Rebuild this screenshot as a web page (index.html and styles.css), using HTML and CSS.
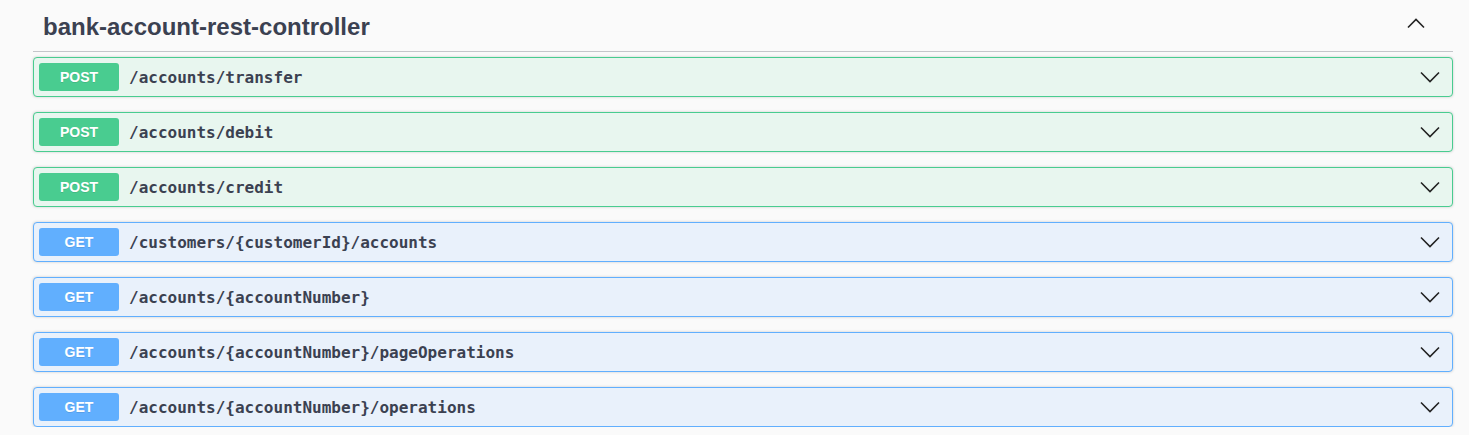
FILE: index.html
```html
<!DOCTYPE html>
<html>
<head>
<meta charset="utf-8">
<link rel="stylesheet" href="styles.css">
</head>
<body>
<div class="wrap">
  <div class="tag">
    <h3 class="tag-title">bank-account-rest-controller</h3>
    <svg class="tag-arrow" width="20" height="20" viewBox="0 0 20 20"><polyline points="2,13.5 10,5.5 18,13.5" fill="none" stroke="#222" stroke-width="1.6"/></svg>
  </div>
  <div class="ops">
    <div class="op post"><span class="method">POST</span><span class="path">/accounts/transfer</span><svg class="arrow" width="20" height="20" viewBox="0 0 20 20"><polyline points="1,5.5 10,14.5 19,5.5" fill="none" stroke="#222" stroke-width="1.6"/></svg></div>
    <div class="op post"><span class="method">POST</span><span class="path">/accounts/debit</span><svg class="arrow" width="20" height="20" viewBox="0 0 20 20"><polyline points="1,5.5 10,14.5 19,5.5" fill="none" stroke="#222" stroke-width="1.6"/></svg></div>
    <div class="op post"><span class="method">POST</span><span class="path">/accounts/credit</span><svg class="arrow" width="20" height="20" viewBox="0 0 20 20"><polyline points="1,5.5 10,14.5 19,5.5" fill="none" stroke="#222" stroke-width="1.6"/></svg></div>
    <div class="op get"><span class="method">GET</span><span class="path">/customers/{customerId}/accounts</span><svg class="arrow" width="20" height="20" viewBox="0 0 20 20"><polyline points="1,5.5 10,14.5 19,5.5" fill="none" stroke="#222" stroke-width="1.6"/></svg></div>
    <div class="op get"><span class="method">GET</span><span class="path">/accounts/{accountNumber}</span><svg class="arrow" width="20" height="20" viewBox="0 0 20 20"><polyline points="1,5.5 10,14.5 19,5.5" fill="none" stroke="#222" stroke-width="1.6"/></svg></div>
    <div class="op get"><span class="method">GET</span><span class="path">/accounts/{accountNumber}/pageOperations</span><svg class="arrow" width="20" height="20" viewBox="0 0 20 20"><polyline points="1,5.5 10,14.5 19,5.5" fill="none" stroke="#222" stroke-width="1.6"/></svg></div>
    <div class="op get"><span class="method">GET</span><span class="path">/accounts/{accountNumber}/operations</span><svg class="arrow" width="20" height="20" viewBox="0 0 20 20"><polyline points="1,5.5 10,14.5 19,5.5" fill="none" stroke="#222" stroke-width="1.6"/></svg></div>
  </div>
</div>
</body>
</html>
```

FILE: styles.css
```css
html, body {
  margin: 0;
  padding: 0;
  background: #fafafa;
}
body {
  font-family: "Liberation Sans", Arial, sans-serif;
  color: #3b4151;
}
.wrap {
  width: 1420px;
  margin-left: 33px;
}
.tag {
  display: flex;
  align-items: center;
  height: 51px;
  padding: 0 27px 0 10px;
  border-bottom: 1px solid #c4c6ca;
  margin-bottom: 5px;
}
.tag-title {
  flex: 1;
  margin: 0;
  font-size: 24px;
  font-weight: 700;
  color: #3b4151;
  position: relative;
  top: 1px;
}
.tag-arrow {
  display: block;
  margin-top: -3px;
}
.ops {
  display: flex;
  flex-direction: column;
  gap: 15px;
}
.op {
  display: flex;
  align-items: center;
  padding: 5px;
  border: 1px solid #000;
  border-radius: 4px;
  box-shadow: 0 0 3px rgba(0, 0, 0, 0.19);
}
.op.post {
  background: #e8f6ef;
  border-color: #49cc90;
}
.op.get {
  background: #e9f1fb;
  border-color: #61affe;
}
.method {
  min-width: 80px;
  padding: 6px 0;
  text-align: center;
  font-size: 14px;
  line-height: 16px;
  font-weight: 700;
  color: #fff;
  border-radius: 3px;
  text-shadow: 0 1px 0 rgba(0, 0, 0, 0.1);
}
.post .method { background: #49cc90; }
.get .method { background: #61affe; }
.path {
  flex: 1;
  padding: 0 10px;
  font-family: "DejaVu Sans Mono", "Liberation Mono", monospace;
  font-size: 16px;
  font-weight: 700;
  color: #3b4151;
}
.arrow {
  display: block;
  margin-right: 7px;
  margin-top: -1px;
}
```
